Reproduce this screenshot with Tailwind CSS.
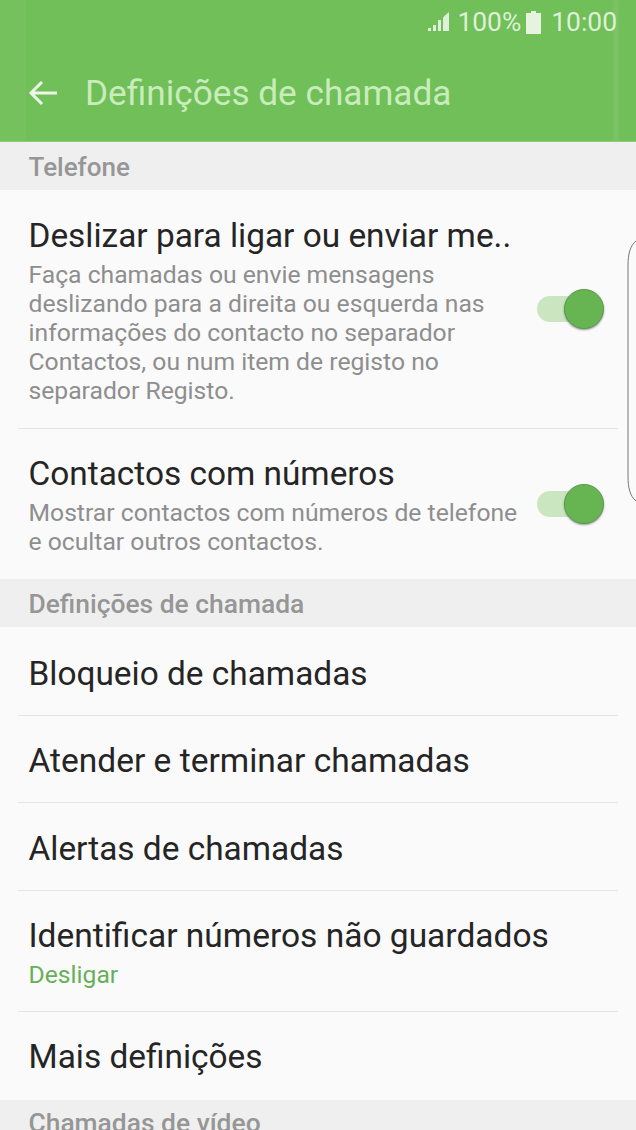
<!DOCTYPE html>
<html lang="pt">
<head>
<meta charset="utf-8">
<script src="https://cdn.jsdelivr.net/npm/@tailwindcss/browser@4"></script>
</head>
<body class="m-0">
<div class="relative w-[636px] h-[1130px] overflow-hidden bg-[#fafafa] font-['Roboto',sans-serif]">
  <header class="relative h-[142px] bg-[#70bf58] border-b border-[#8ccb78] flex flex-col">
    <div class="absolute left-0 top-0 w-[26px] h-[141px] bg-white/[0.03]"></div>
    <div class="absolute left-[613px] top-0 w-[6px] h-[141px] bg-white/[0.08] blur-[1px]"></div>
    <div class="relative h-[44px] flex items-center justify-end pr-[19px] text-[26.4px] text-[#dff0d8] leading-none">
      <svg class="w-[22px] h-[22px] mr-[7px]" viewBox="0 0 22 22" fill="#dff0d8"><rect x="0" y="17" width="3" height="3"/><rect x="5" y="14" width="3" height="6"/><rect x="10" y="9" width="3" height="11"/><path d="M15 6.5L17.5 4 21 1v19h-6z"/></svg>
      <span>100%</span>
      <svg class="w-[15px] h-[23px] ml-[5px] mr-[10px]" viewBox="0 0 15 23" fill="#e6f3e0"><path d="M5 0h5v2h5v21H0V2h5z"/></svg>
      <span>10:00</span>
    </div>
    <div class="relative h-[97px] flex items-center pl-[28px] pt-[1px]">
      <svg class="w-[30px] h-[30px]" viewBox="0 0 30 30" fill="none" stroke="#eef8ea" stroke-width="3"><path d="M29 15H3M14 4L3 15l11 11"/></svg>
      <h1 class="ml-[27px] mt-[1px] text-[35.2px] font-normal text-[#c9ecbc] leading-none">Definições de chamada</h1>
    </div>
  </header>

  <div class="h-[48px] bg-[#efefef] flex items-center pl-[28.5px] pt-[2px] text-[26px] font-medium text-[#969696] leading-none">Telefone</div>

  <div class="mx-[18px] border-b border-[#e4e4e4] h-[239px] pl-[10.5px] pt-[26px] flex items-center">
    <div class="w-[500px] self-start">
      <div class="text-[33.4px] leading-[40px] text-[#252525] whitespace-nowrap">Deslizar para ligar ou enviar me..</div>
      <div class="mt-[4px] text-[24.7px] leading-[29px] text-[#8e8e8e] whitespace-nowrap">Faça chamadas ou envie mensagens<br>deslizando para a direita ou esquerda nas<br>informações do contacto no separador<br>Contactos, ou num item de registo no<br>separador Registo.</div>
    </div>
    <div class="relative ml-[8.5px] mt-[-26px] w-[67px] h-[40px]">
      <div class="absolute left-0 top-[7px] w-[50px] h-[26px] rounded-full bg-[#cae6c0]"></div>
      <div class="absolute right-0 top-0 w-[40px] h-[40px] rounded-full bg-[#66b552] border border-[#5c9a4b] shadow-[0_1px_2px_rgba(0,0,0,0.4)]"></div>
    </div>
  </div>

  <div class="mx-[18px] h-[150px] pl-[10.5px] pt-[25px] flex items-center">
    <div class="w-[500px] self-start">
      <div class="text-[33.4px] leading-[40px] text-[#252525] whitespace-nowrap">Contactos com números</div>
      <div class="mt-[4px] text-[24.7px] leading-[29px] text-[#8e8e8e] whitespace-nowrap">Mostrar contactos com números de telefone<br>e ocultar outros contactos.</div>
    </div>
    <div class="relative ml-[8.5px] mt-[-25px] w-[67px] h-[40px]">
      <div class="absolute left-0 top-[7px] w-[50px] h-[26px] rounded-full bg-[#cae6c0]"></div>
      <div class="absolute right-0 top-0 w-[40px] h-[40px] rounded-full bg-[#66b552] border border-[#5c9a4b] shadow-[0_1px_2px_rgba(0,0,0,0.4)]"></div>
    </div>
  </div>

  <div class="h-[48px] bg-[#efefef] flex items-center pl-[28.5px] pt-[2px] text-[26.4px] font-medium text-[#969696] leading-none">Definições de chamada</div>

  <div class="mx-[18px] h-[89px] border-b border-[#e4e4e4] pl-[10.5px] pt-[5px] flex items-center text-[33.4px] text-[#252525] leading-none">Bloqueio de chamadas</div>
  <div class="mx-[18px] h-[87px] border-b border-[#e4e4e4] pl-[10.5px] pt-[4px] flex items-center text-[33.5px] text-[#252525] leading-none">Atender e terminar chamadas</div>
  <div class="mx-[18px] h-[88px] border-b border-[#e4e4e4] pl-[10.5px] pt-[5px] flex items-center text-[33.4px] text-[#252525] leading-none">Alertas de chamadas</div>
  <div class="mx-[18px] h-[121px] border-b border-[#e4e4e4] pl-[10.5px] pt-[25px]">
    <div class="text-[33.5px] leading-[40px] text-[#252525]">Identificar números não guardados</div>
    <div class="mt-[4px] text-[24.7px] leading-[29px] text-[#68af59]">Desligar</div>
  </div>
  <div class="mx-[18px] h-[88px] pl-[10.5px] pt-[2px] flex items-center text-[33.4px] text-[#252525] leading-none">Mais definições</div>
  <div class="h-[49px] bg-[#efefef] pl-[28.5px] pt-[10px] text-[26.4px] font-medium text-[#969696] leading-none">Chamadas de vídeo</div>

  <svg class="absolute right-0 top-[240px] w-[10px] h-[262px]" viewBox="0 0 10 262" fill="none" stroke="#777" stroke-width="1"><path d="M10 1C4 6 2 14 2 26v210c0 12 2 20 8 25"/></svg>
</div>
</body>
</html>
